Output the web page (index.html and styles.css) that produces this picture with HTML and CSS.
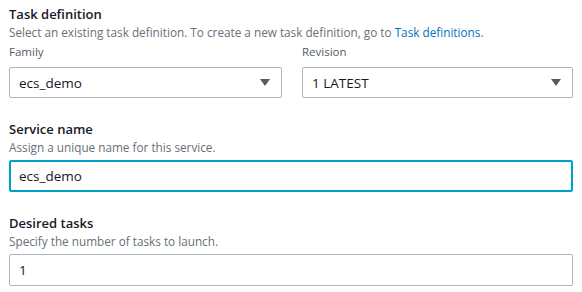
FILE: index.html
```html
<!DOCTYPE html>
<html>
<head>
<meta charset="utf-8">
<link rel="stylesheet" href="styles.css">
</head>
<body>
<div class="form">
  <section class="field">
    <div class="title">Task definition</div>
    <div class="desc">Select an existing task definition. To create a new task definition, go to <a class="link" href="#">Task definitions</a>.</div>
    <div class="cols">
      <div class="col">
        <div class="label">Family</div>
        <div class="select"><span>ecs_demo</span><svg class="caret" width="10" height="7" viewBox="0 0 10 7"><path d="M0 0H10L5 7Z" fill="#545b64"/></svg></div>
      </div>
      <div class="col">
        <div class="label">Revision</div>
        <div class="select"><span>1 LATEST</span><svg class="caret" width="10" height="7" viewBox="0 0 10 7"><path d="M0 0H10L5 7Z" fill="#545b64"/></svg></div>
      </div>
    </div>
  </section>
  <section class="field">
    <div class="title">Service name</div>
    <div class="desc">Assign a unique name for this service.</div>
    <div class="input focused">ecs_demo</div>
  </section>
  <section class="field">
    <div class="title">Desired tasks</div>
    <div class="desc">Specify the number of tasks to launch.</div>
    <div class="input">1</div>
  </section>
</div>
</body>
</html>
```

FILE: styles.css
```css
html, body {
  margin: 0;
  padding: 0;
  background: #ffffff;
}
body {
  font-family: "Open Sans", "Noto Sans", sans-serif;
  color: #16191f;
}
.form {
  padding: 4px 9px 0 9px;
  display: flex;
  flex-direction: column;
  gap: 21px;
}
.field {
  display: flex;
  flex-direction: column;
}
.title {
  font-size: 13px;
  line-height: 20px;
  font-weight: 600;
  color: #16191f;
}
.desc {
  font-size: 11.75px;
  line-height: 16px;
  color: #687078;
  margin-bottom: 5px;
}
.link {
  color: #0073bb;
  text-decoration: none;
}
.cols {
  display: grid;
  grid-template-columns: 273px 271px;
  column-gap: 20px;
  margin-top: -1px;
}
.col {
  display: flex;
  flex-direction: column;
}
.label {
  font-size: 11.5px;
  line-height: 16px;
  color: #545b64;
  margin-bottom: 7px;
}
.select {
  height: 31px;
  box-sizing: border-box;
  border: 1px solid #aab7b8;
  border-radius: 2px;
  display: flex;
  align-items: center;
  justify-content: space-between;
  padding: 0 11px 0 9px;
  font-size: 13.5px;
  color: #16191f;
}
.input {
  height: 32px;
  box-sizing: border-box;
  border: 1px solid #aab7b8;
  border-radius: 2px;
  display: flex;
  align-items: center;
  padding: 0 9px;
  font-size: 13.5px;
  color: #16191f;
}
.input.focused {
  border: 2px solid #00a1c9;
  padding: 0 8px;
}
```
